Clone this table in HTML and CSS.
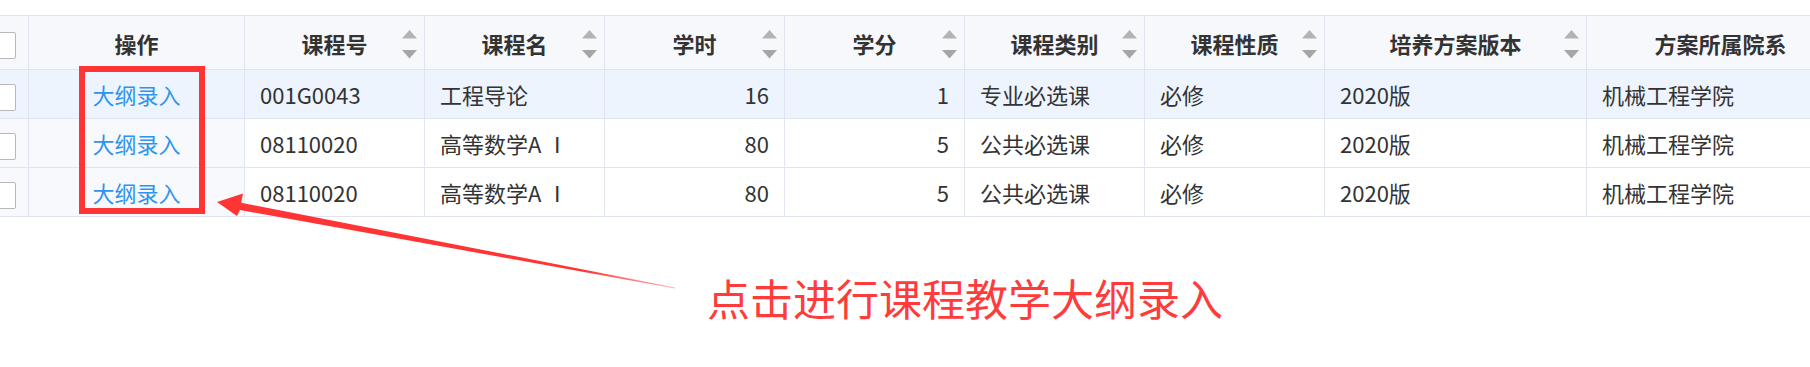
FILE: index.html
```html
<!DOCTYPE html>
<html lang="zh-CN">
<head>
<meta charset="utf-8">
<title>课程列表</title>
<link rel="stylesheet" href="styles.css">
</head>
<body>
<div class="page">
  <table class="grid">
    <colgroup>
      <col class="c-check"><col class="c-op"><col class="c-std"><col class="c-std"><col class="c-std"><col class="c-std"><col class="c-std"><col class="c-std"><col class="c-ver"><col class="c-dept">
    </colgroup>
    <thead>
      <tr>
        <th class="check"><span class="box"></span></th>
        <th>操作</th>
        <th class="sort">课程号<svg class="arrows" viewBox="0 0 15 29"><path d="M0 8.5 7.5 0 15 8.5Z" fill="#b3b3b3"/><path d="M0 20 15 20 7.5 28.5Z" fill="#a6a6a6"/></svg></th>
        <th class="sort">课程名<svg class="arrows" viewBox="0 0 15 29"><path d="M0 8.5 7.5 0 15 8.5Z" fill="#b3b3b3"/><path d="M0 20 15 20 7.5 28.5Z" fill="#a6a6a6"/></svg></th>
        <th class="sort">学时<svg class="arrows" viewBox="0 0 15 29"><path d="M0 8.5 7.5 0 15 8.5Z" fill="#b3b3b3"/><path d="M0 20 15 20 7.5 28.5Z" fill="#a6a6a6"/></svg></th>
        <th class="sort">学分<svg class="arrows" viewBox="0 0 15 29"><path d="M0 8.5 7.5 0 15 8.5Z" fill="#b3b3b3"/><path d="M0 20 15 20 7.5 28.5Z" fill="#a6a6a6"/></svg></th>
        <th class="sort">课程类别<svg class="arrows" viewBox="0 0 15 29"><path d="M0 8.5 7.5 0 15 8.5Z" fill="#b3b3b3"/><path d="M0 20 15 20 7.5 28.5Z" fill="#a6a6a6"/></svg></th>
        <th class="sort">课程性质<svg class="arrows" viewBox="0 0 15 29"><path d="M0 8.5 7.5 0 15 8.5Z" fill="#b3b3b3"/><path d="M0 20 15 20 7.5 28.5Z" fill="#a6a6a6"/></svg></th>
        <th class="sort">培养方案版本<svg class="arrows" viewBox="0 0 15 29"><path d="M0 8.5 7.5 0 15 8.5Z" fill="#b3b3b3"/><path d="M0 20 15 20 7.5 28.5Z" fill="#a6a6a6"/></svg></th>
        <th class="sort">方案所属院系<svg class="arrows" viewBox="0 0 15 29"><path d="M0 8.5 7.5 0 15 8.5Z" fill="#b3b3b3"/><path d="M0 20 15 20 7.5 28.5Z" fill="#a6a6a6"/></svg></th>
      </tr>
    </thead>
    <tbody>
      <tr class="active">
        <td class="check"><span class="box"></span></td>
        <td class="op"><a class="link">大纲录入</a></td>
        <td>001G0043</td>
        <td>工程导论</td>
        <td class="num">16</td>
        <td class="num">1</td>
        <td>专业必选课</td>
        <td>必修</td>
        <td>2020版</td>
        <td>机械工程学院</td>
      </tr>
      <tr>
        <td class="check"><span class="box"></span></td>
        <td class="op"><a class="link">大纲录入</a></td>
        <td>08110020</td>
        <td>高等数学A Ⅰ</td>
        <td class="num">80</td>
        <td class="num">5</td>
        <td>公共必选课</td>
        <td>必修</td>
        <td>2020版</td>
        <td>机械工程学院</td>
      </tr>
      <tr>
        <td class="check"><span class="box"></span></td>
        <td class="op"><a class="link">大纲录入</a></td>
        <td>08110020</td>
        <td>高等数学A Ⅰ</td>
        <td class="num">80</td>
        <td class="num">5</td>
        <td>公共必选课</td>
        <td>必修</td>
        <td>2020版</td>
        <td>机械工程学院</td>
      </tr>
    </tbody>
  </table>

  <div class="highlight-box"></div>
  <svg class="pointer" width="1810" height="367" viewBox="0 0 1810 367">
    <defs>
      <linearGradient id="fade" x1="217" y1="202" x2="675" y2="288" gradientUnits="userSpaceOnUse">
        <stop offset="0" stop-color="#ff3535"/>
        <stop offset="0.8" stop-color="#ff3535"/>
        <stop offset="1" stop-color="#ff3535" stop-opacity="0.35"/>
      </linearGradient>
    </defs>
    <polygon fill="url(#fade)" points="217,202 243,193.5 241.2,202.8 675,287.4 675,288.4 240,210 237,216"/>
  </svg>
  <div class="note">点击进行课程教学大纲录入</div>
</div>
</body>
</html>
```
FILE: styles.css
```css
html, body {
  margin: 0;
  padding: 0;
  background: #ffffff;
}

.page {
  position: relative;
  width: 1810px;
  height: 367px;
  overflow: hidden;
  font-family: "Noto Sans CJK SC", "Noto Sans", sans-serif;
}

.grid {
  margin: 15px 0 0 -24px;
  border-collapse: collapse;
  table-layout: fixed;
  width: 1878px;
  font-size: 22px;
  color: #333333;
}

.c-check { width: 52px; }
.c-op { width: 216px; }
.c-std { width: 180px; }
.c-ver { width: 262px; }
.c-dept { width: 268px; }

.grid th,
.grid td {
  border: 1px solid #dfe3f2;
  padding: 0 15px;
  white-space: nowrap;
  overflow: hidden;
}

.grid thead tr {
  height: 54px;
}

.grid th {
  background: #f7f8fc;
  font-weight: 700;
  color: #333333;
  text-align: center;
}

.grid th.sort {
  position: relative;
}

.arrows {
  position: absolute;
  right: 7px;
  top: 14px;
  width: 15px;
  height: 29px;
}

.grid tbody tr {
  height: 49px;
}

.grid td {
  text-align: left;
  background: #ffffff;
}

.grid td.num {
  text-align: right;
}

.grid td.check,
.grid td.op {
  background: #f8f9fc;
}

.grid tr.active td {
  background: #edf4fd;
}

.grid .check {
  padding: 0;
  text-align: center;
}

.box {
  display: inline-block;
  width: 25px;
  height: 25px;
  border: 1px solid #b8b8b8;
  border-radius: 2px;
  background: #ffffff;
  vertical-align: middle;
}

.grid td.op {
  text-align: center;
}

.link {
  color: #2f94ec;
  text-decoration: none;
}

.highlight-box {
  position: absolute;
  left: 79px;
  top: 66px;
  width: 126px;
  height: 148px;
  box-sizing: border-box;
  border: 6px solid #ff3535;
}

.pointer {
  position: absolute;
  left: 0;
  top: 0;
}

.note {
  position: absolute;
  left: 707px;
  top: 276px;
  font-size: 43px;
  line-height: 43px;
  color: #ff3b3b;
  white-space: nowrap;
}
```
